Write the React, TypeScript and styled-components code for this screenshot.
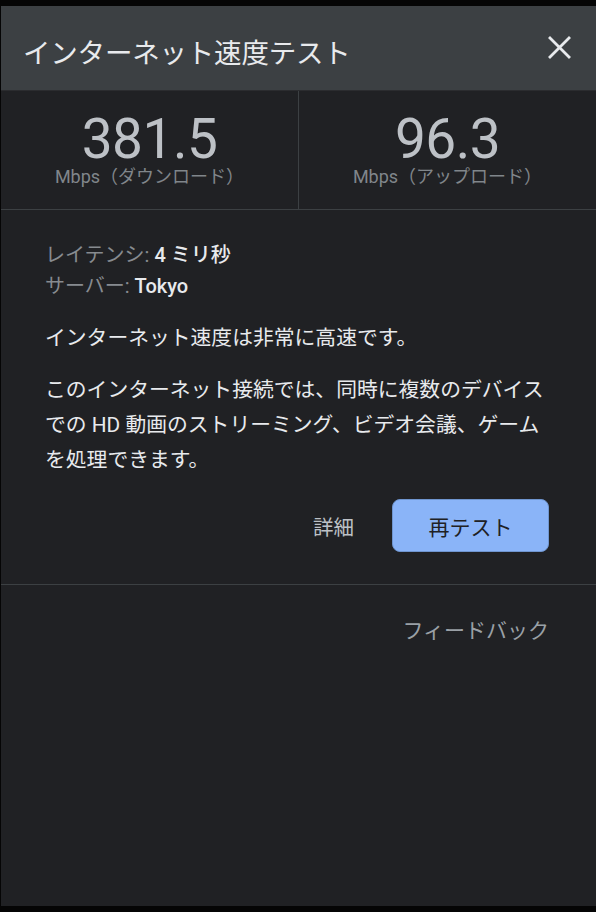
import React from "react";
import styled, { createGlobalStyle } from "styled-components";

const Global = createGlobalStyle`
  html, body { margin: 0; padding: 0; background: #050505; }
  body { font-family: Roboto, "Noto Sans CJK JP", sans-serif; }
  * { box-sizing: border-box; }
`;

const Frame = styled.div`
  width: 596px;
  height: 912px;
  padding: 6px 0 6px 1px;
  background: #050505;
`;

const Panel = styled.div`
  height: 900px;
  background: #202124;
  display: flex;
  flex-direction: column;
  font-family: Roboto, "Noto Sans CJK JP", sans-serif;
`;

const Header = styled.div`
  height: 85px;
  background: #3c4043;
  border-bottom: 1px solid #2b2c2f;
  display: flex;
  align-items: center;
  justify-content: space-between;
  padding: 0 25px 0 22px;
`;

const Title = styled.h1`
  margin: 0;
  padding-top: 12px;
  font-size: 27.5px;
  font-weight: 400;
  color: #e8eaed;
  line-height: 34px;
  letter-spacing: -0.2px;
`;

const CloseButton = styled.button`
  margin-top: -2px;
  width: 23px;
  height: 23px;
  padding: 0;
  border: none;
  background: none;
  display: flex;
  align-items: center;
  justify-content: center;
  cursor: pointer;
`;

const Stats = styled.div`
  height: 119px;
  display: flex;
  border-bottom: 1px solid #3c4043;
`;

const StatCell = styled.div<{ $divider?: boolean }>`
  flex: 1;
  display: flex;
  flex-direction: column;
  align-items: center;
  padding-top: 21px;
  border-right: ${(p) => (p.$divider ? "1px solid #3c4043" : "none")};
`;

const StatValue = styled.div`
  font-family: Roboto, "Liberation Sans", sans-serif;
  font-size: 55px;
  line-height: 54px;
  color: #bdc1c6;
  font-weight: 400;
  letter-spacing: -0.5px;
`;

const StatUnit = styled.div`
  margin-top: 2px;
  font-size: 18px;
  line-height: 18px;
  color: #80868b;
`;

const Content = styled.div`
  padding: 30px 47px 0 44px;
  display: flex;
  flex-direction: column;
`;

const InfoList = styled.div`
  display: flex;
  flex-direction: column;
`;

const InfoRow = styled.div`
  font-size: 20px;
  line-height: 31px;
  color: #878b90;
`;

const InfoValue = styled.span`
  color: #e8eaed;
  font-weight: 500;
`;

const Summary = styled.p`
  margin: 22px 0 0;
  font-size: 20.8px;
  line-height: 28px;
  color: #e8eaed;
`;

const Description = styled.p`
  margin: 21px 0 0;
  font-size: 20.8px;
  line-height: 35px;
  color: #e8eaed;
`;

const Actions = styled.div`
  margin-top: 21px;
  display: flex;
  justify-content: flex-end;
  align-items: center;
  gap: 38px;
`;

const TextButton = styled.button`
  border: none;
  background: none;
  padding: 0;
  font-family: inherit;
  font-size: 20.5px;
  color: #bdc1c6;
  cursor: pointer;
`;

const PrimaryButton = styled.button`
  width: 157px;
  height: 53px;
  border-radius: 8px;
  border: 1px solid #6f95cf;
  background: #8ab4f8;
  color: #202124;
  font-family: inherit;
  font-size: 21px;
  cursor: pointer;
`;

const Divider = styled.div`
  margin-top: 32px;
  height: 1px;
  background: #3c4043;
`;

const Footer = styled.div`
  padding: 32px 47px 0 46px;
  display: flex;
  justify-content: flex-end;
`;

const FeedbackLink = styled.a`
  font-size: 21px;
  line-height: 28px;
  color: #9aa0a6;
  text-decoration: none;
  cursor: pointer;
`;

export default function App() {
  return (
    <Frame>
      <Global />
      <Panel>
        <Header>
          <Title>インターネット速度テスト</Title>
          <CloseButton aria-label="閉じる">
            <svg width="23" height="23" viewBox="0 0 23 23">
              <path
                d="M2 2 L21 21 M21 2 L2 21"
                stroke="#e8eaed"
                strokeWidth="2.8"
                strokeLinecap="square"
                fill="none"
              />
            </svg>
          </CloseButton>
        </Header>
        <Stats>
          <StatCell $divider>
            <StatValue>381.5</StatValue>
            <StatUnit>Mbps（ダウンロード）</StatUnit>
          </StatCell>
          <StatCell>
            <StatValue>96.3</StatValue>
            <StatUnit>Mbps（アップロード）</StatUnit>
          </StatCell>
        </Stats>
        <Content>
          <InfoList>
            <InfoRow>
              レイテンシ: <InfoValue>4 ミリ秒</InfoValue>
            </InfoRow>
            <InfoRow>
              サーバー: <InfoValue>Tokyo</InfoValue>
            </InfoRow>
          </InfoList>
          <Summary>インターネット速度は非常に高速です。</Summary>
          <Description>
            このインターネット接続では、同時に複数のデバイスでの HD 動画のストリーミング、ビデオ会議、ゲームを処理できます。
          </Description>
          <Actions>
            <TextButton>詳細</TextButton>
            <PrimaryButton>再テスト</PrimaryButton>
          </Actions>
        </Content>
        <Divider />
        <Footer>
          <FeedbackLink>フィードバック</FeedbackLink>
        </Footer>
      </Panel>
    </Frame>
  );
}
